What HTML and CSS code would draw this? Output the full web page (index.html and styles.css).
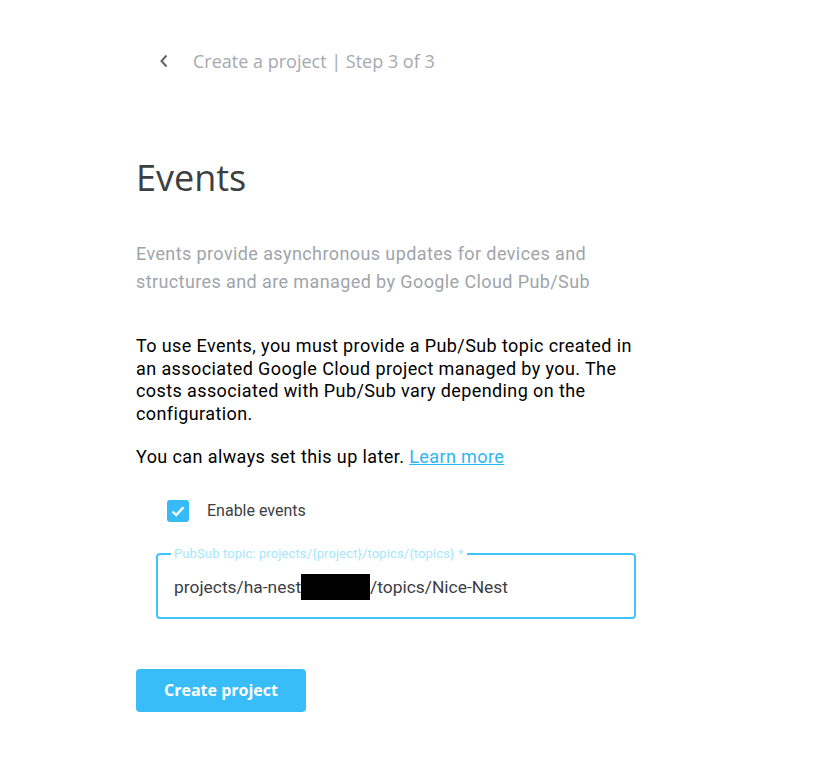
FILE: index.html
```html
<!DOCTYPE html>
<html>
<head>
	<meta charset="utf-8">
	<title>Create a project</title>
	<link rel="stylesheet" href="styles.css">
</head>
<body>
	<div id="wrapper">
		<div id="header">
			<a class="back" href="#">
				<svg width="10" height="14" viewBox="0 0 10 14"><path d="M7.5 1.5 L2.5 7 L7.5 12.5" fill="none" stroke="#5f6368" stroke-width="2"/></svg>
			</a>
			<span class="step">Create a project | Step 3 of 3</span>
		</div>
		<h1>Events</h1>
		<p class="subtitle">Events provide asynchronous updates for devices and structures and are managed by Google Cloud Pub/Sub</p>
		<p class="body">To use Events, you must provide a Pub/Sub topic created in an associated Google Cloud project managed by you. The costs associated with Pub/Sub vary depending on the configuration.</p>
		<p class="body">You can always set this up later. <a href="#">Learn more</a></p>
		<label class="check">
			<span class="box">
				<svg width="16" height="16" viewBox="0 0 16 16"><path d="M2.5 8.5 L6.2 12 L13.5 4.2" fill="none" stroke="#fff" stroke-width="2.4"/></svg>
			</span>
			<span>Enable events</span>
		</label>
		<fieldset class="field">
			<legend>PubSub topic: projects/{project}/topics/{topics} *</legend>
			<div class="value">projects/ha-nest<span class="redact"></span>/topics/Nice-Nest</div>
		</fieldset>
		<button class="primary">Create project</button>
	</div>
</body>
</html>
```

FILE: styles.css
```css
*
{
	padding: 0px;
	margin: 0px;
	box-sizing: border-box;
}
body
{
	color: black;
	background-color: white;
	font-family: Roboto, "Liberation Sans", sans-serif;
}
#wrapper
{
	width: 500px;
	margin-left: 136px;
	padding-top: 47px;
}
#header
{
	display: flex;
	align-items: center;
	height: 28px;
	padding-left: 23px;
}
.back
{
	display: flex;
	width: 34px;
}
.step
{
	font-family: "Open Sans", sans-serif;
	font-size: 18px;
	color: #a6a9ae;
}
h1
{
	font-family: "Open Sans", sans-serif;
	font-weight: 400;
	font-size: 36px;
	color: #3c4043;
	margin-top: 79px;
	line-height: 48px;
}
.subtitle
{
	font-size: 18px;
	line-height: 28px;
	letter-spacing: 0.4px;
	color: #a0a4aa;
	margin-top: 38px;
	width: 470px;
}
.body
{
	font-size: 18px;
	line-height: 22.7px;
	letter-spacing: 0.4px;
	color: #000;
}
.subtitle + .body
{
	margin-top: 39px;
}
.body + .body
{
	margin-top: 20px;
}
.body a
{
	color: #29b6f6;
}
.check
{
	display: flex;
	align-items: center;
	margin: 31px 0 0 31px;
	font-size: 16px;
	color: #3c4043;
}
.box
{
	display: flex;
	align-items: center;
	justify-content: center;
	width: 22px;
	height: 22px;
	border-radius: 3px;
	background: #36bbf7;
	margin-right: 18px;
}
.field
{
	margin: 26px 0 0 20px;
	width: 480px;
	height: 71px;
	border: 2px solid #40c4ff;
	border-radius: 4px;
	padding: 0 16px;
}
.field legend
{
	font-size: 13px;
	letter-spacing: 0.12px;
	color: #a6e7ff;
	padding: 0 3px;
	margin-left: -3px;
	line-height: 12px;
}
.value
{
	display: flex;
	align-items: center;
	font-size: 17.4px;
	color: #3c4043;
	margin-top: 14px;
	line-height: 26px;
}
.redact
{
	display: inline-block;
	width: 69px;
	height: 26px;
	background: #000;
}
.primary
{
	display: block;
	margin-top: 50px;
	width: 170px;
	height: 43px;
	border: none;
	border-radius: 4px;
	background: #38bdf8;
	color: #fff;
	font-family: "Open Sans", sans-serif;
	font-weight: 700;
	font-size: 16px;
}
```
